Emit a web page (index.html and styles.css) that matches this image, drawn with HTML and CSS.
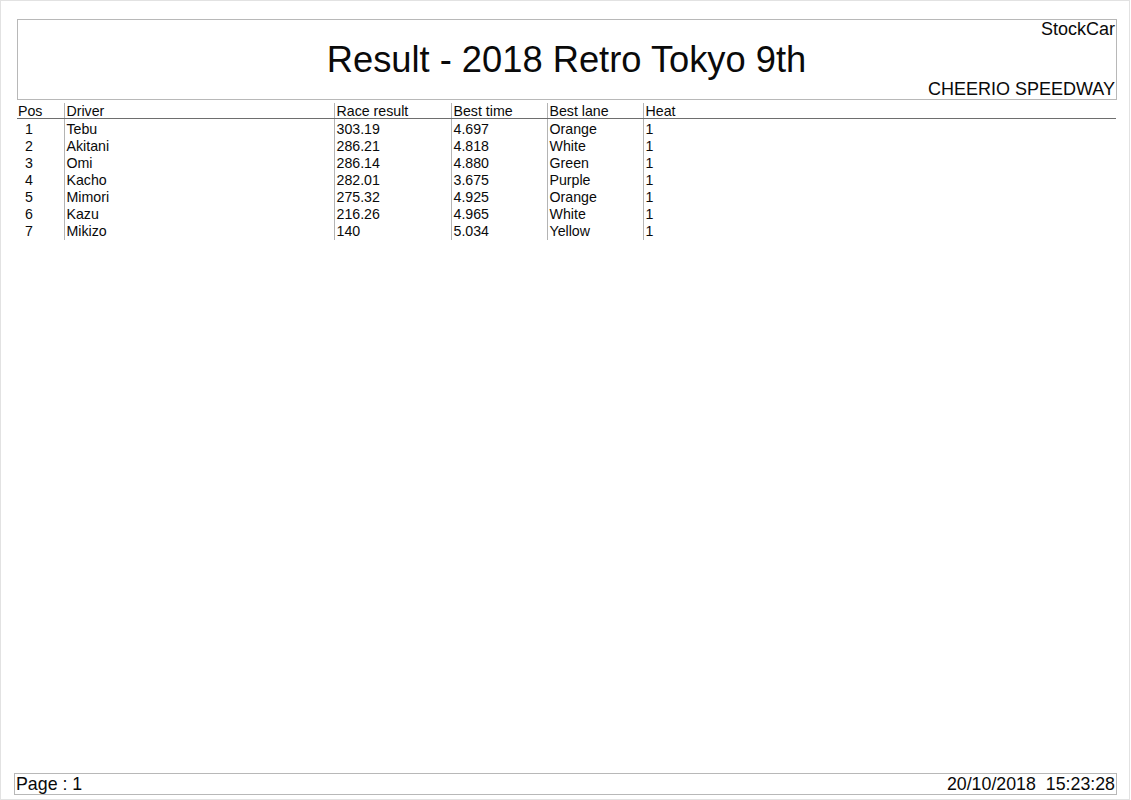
FILE: index.html
```html
<!DOCTYPE html>
<html lang="en">
<head>
<meta charset="utf-8">
<title>Result - 2018 Retro Tokyo 9th</title>
<link rel="stylesheet" href="styles.css">
</head>
<body>
<div class="page">
  <header class="report-head">
    <div class="category">StockCar</div>
    <h1 class="title">Result - 2018 Retro Tokyo 9th</h1>
    <div class="venue">CHEERIO SPEEDWAY</div>
  </header>

  <table class="results">
    <colgroup>
      <col class="c-pos"><col class="c-driver"><col class="c-race"><col class="c-time"><col class="c-lane"><col class="c-heat">
    </colgroup>
    <thead>
      <tr>
        <th class="pos">Pos</th><th>Driver</th><th>Race result</th><th>Best time</th><th>Best lane</th><th>Heat</th>
      </tr>
    </thead>
    <tbody>
      <tr class="first"><td class="pos">1</td><td>Tebu</td><td>303.19</td><td>4.697</td><td>Orange</td><td>1</td></tr>
      <tr><td class="pos">2</td><td>Akitani</td><td>286.21</td><td>4.818</td><td>White</td><td>1</td></tr>
      <tr><td class="pos">3</td><td>Omi</td><td>286.14</td><td>4.880</td><td>Green</td><td>1</td></tr>
      <tr><td class="pos">4</td><td>Kacho</td><td>282.01</td><td>3.675</td><td>Purple</td><td>1</td></tr>
      <tr><td class="pos">5</td><td>Mimori</td><td>275.32</td><td>4.925</td><td>Orange</td><td>1</td></tr>
      <tr><td class="pos">6</td><td>Kazu</td><td>216.26</td><td>4.965</td><td>White</td><td>1</td></tr>
      <tr><td class="pos">7</td><td>Mikizo</td><td>140</td><td>5.034</td><td>Yellow</td><td>1</td></tr>
    </tbody>
  </table>

  <footer class="report-foot">
    <span class="page-no">Page : 1</span>
    <span class="stamp">20/10/2018&nbsp;&nbsp;15:23:28</span>
  </footer>
</div>
</body>
</html>
```

FILE: styles.css
```css
html, body {
  margin: 0;
  padding: 0;
  background: #ffffff;
}

body {
  font-family: "Liberation Sans", Arial, sans-serif;
  color: #0a0a0a;
}

.page {
  box-sizing: border-box;
  width: 1130px;
  height: 800px;
  border: 1px solid #e2e2e2;
  display: flex;
  flex-direction: column;
}

.report-head {
  box-sizing: border-box;
  margin: 18px 0 0 16px;
  width: 1100px;
  height: 81px;
  border: 1px solid #b8b8b8;
  padding-right: 1px;
  display: flex;
  flex-direction: column;
}

.category,
.venue {
  font-size: 18px;
  line-height: 18px;
  text-align: right;
}

.title {
  margin: 4px 0 0 0;
  font-size: 36.3px;
  line-height: 36px;
  font-weight: normal;
  text-align: center;
}

.venue {
  margin-top: 2px;
}

.results {
  margin: 3px 0 0 16px;
  width: 1099px;
  border-collapse: collapse;
  table-layout: fixed;
  font-size: 14.2px;
}

.c-pos { width: 47px; }
.c-driver { width: 270px; }
.c-race { width: 117px; }
.c-time { width: 96px; }
.c-lane { width: 96px; }
.c-heat { width: auto; }

.results th {
  font-weight: normal;
  text-align: left;
  line-height: 14px;
  height: 14px;
  padding: 1px 0 0 2px;
  border-bottom: 1px solid #6e6e6e;
  vertical-align: top;
}

.results td {
  line-height: 17px;
  height: 17px;
  padding: 0 0 0 2px;
  vertical-align: top;
  white-space: nowrap;
}

.results th + th,
.results td + td {
  border-left: 1px solid #b4b4b4;
}

.results tr.first td {
  padding-top: 2px;
}

.results th.pos {
  padding-left: 1px;
}

.results td.pos {
  padding-left: 8px;
}

.report-foot {
  box-sizing: border-box;
  margin: auto 12px 4px 13px;
  height: 22px;
  border: 1px solid #b8b8b8;
  display: flex;
  justify-content: space-between;
  font-size: 17.8px;
  line-height: 20px;
  padding: 0 1px 0 1px;
  white-space: nowrap;
}
```
